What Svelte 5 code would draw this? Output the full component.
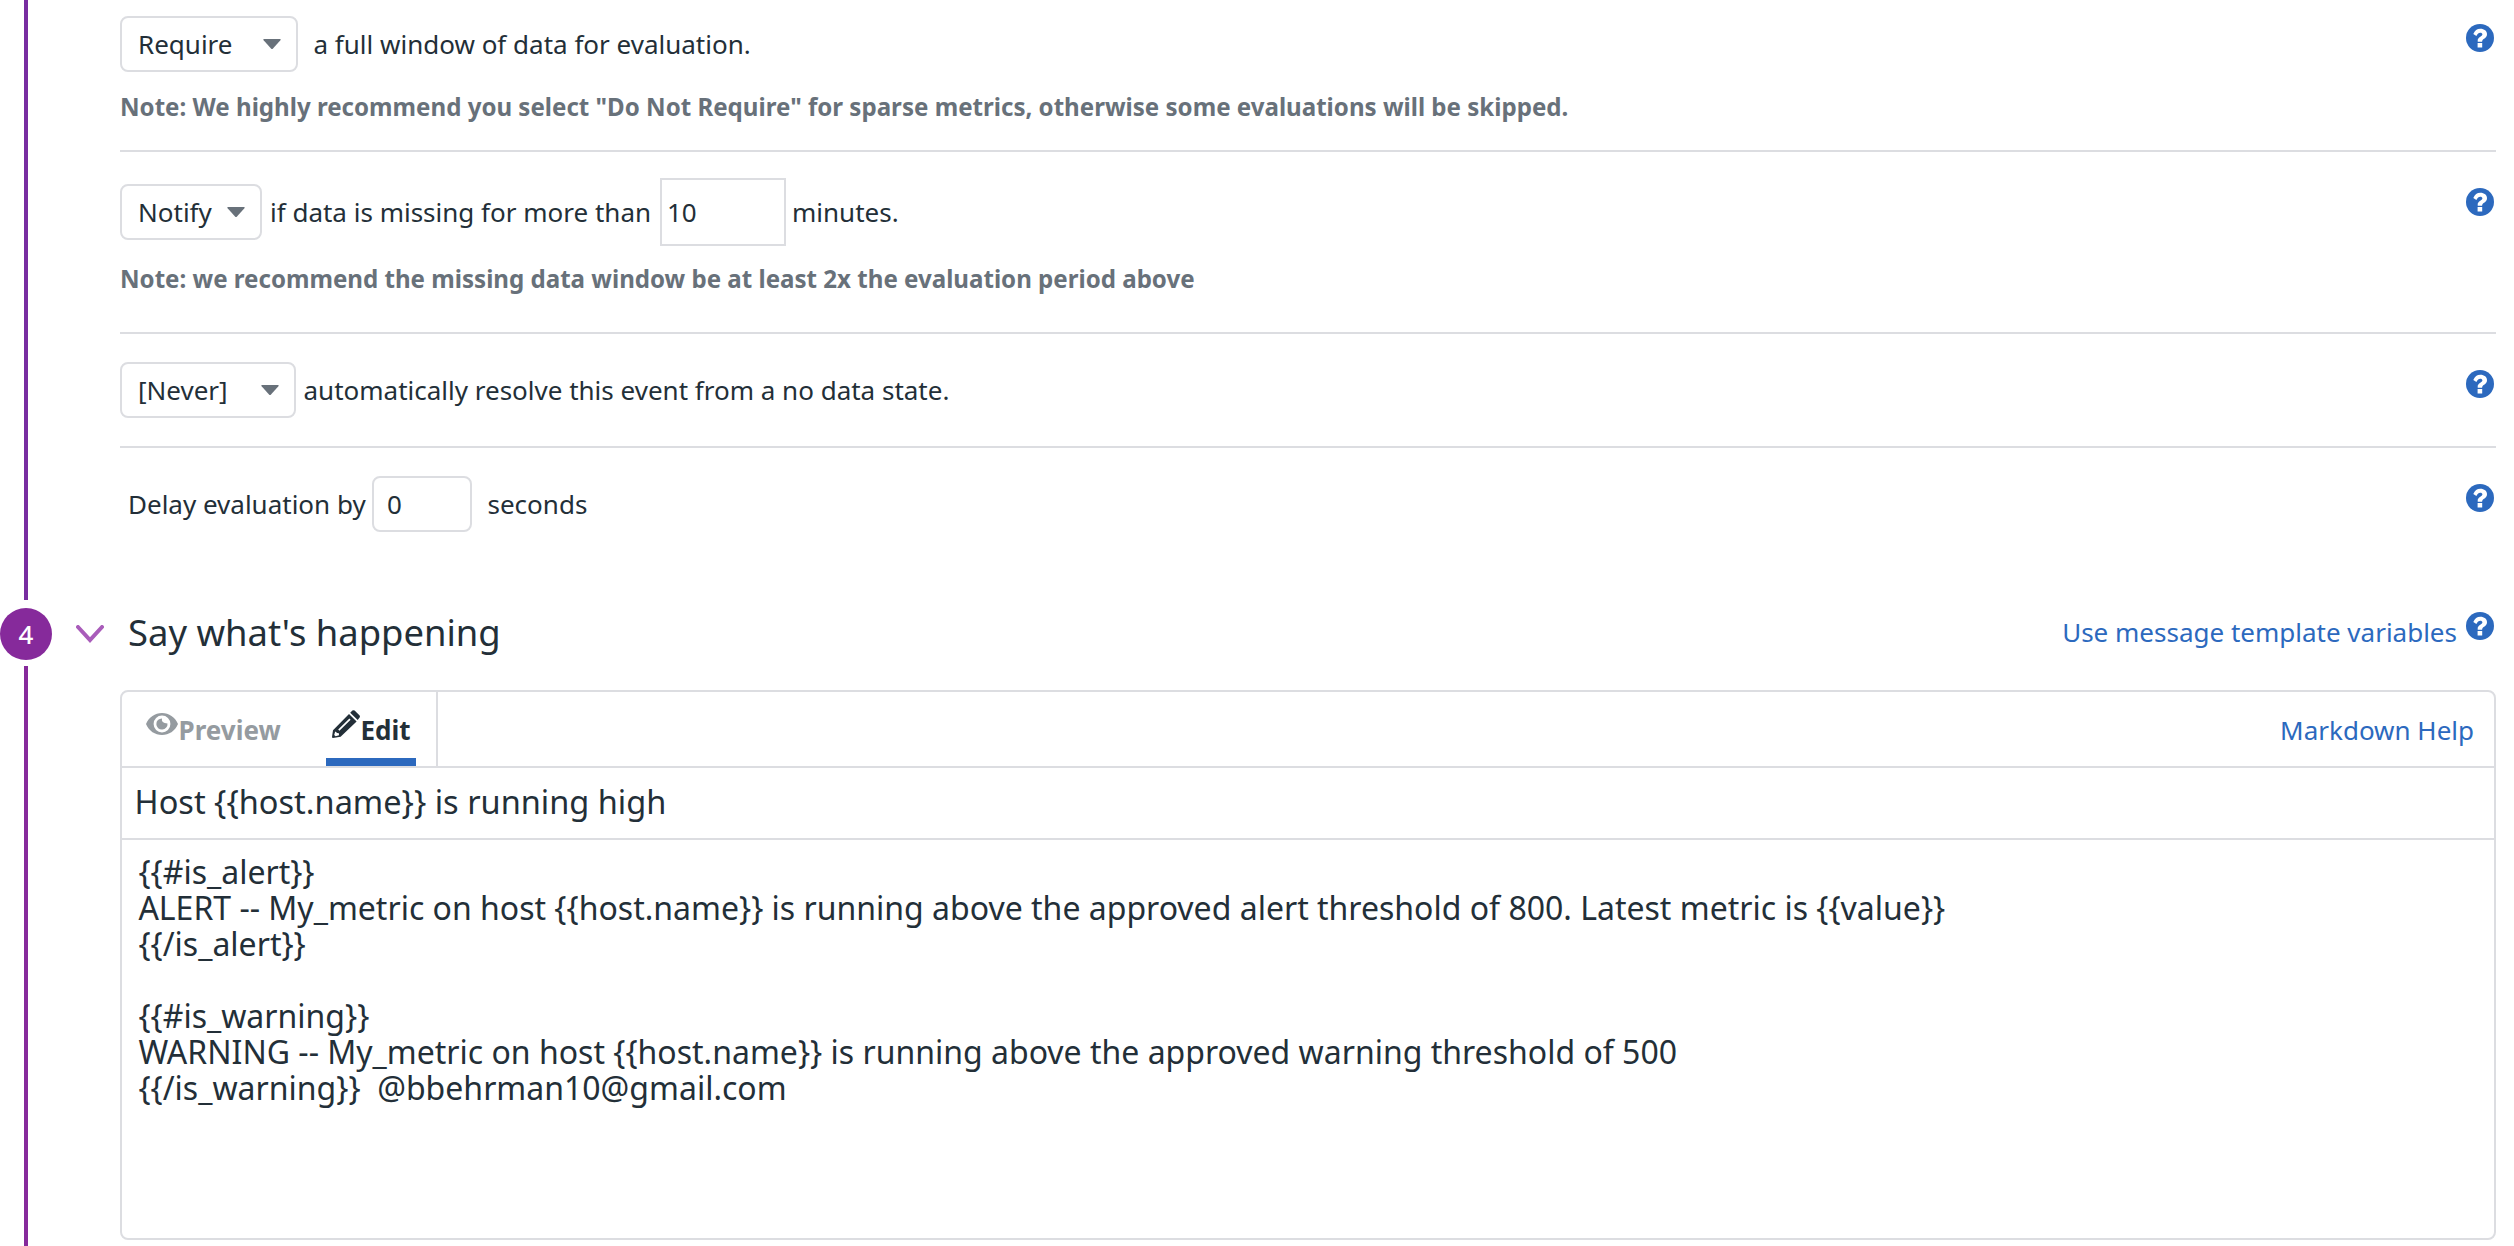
<script>
  const message = `{{#is_alert}}
ALERT -- My_metric on host {{host.name}} is running above the approved alert threshold of 800. Latest metric is {{value}}
{{/is_alert}}

{{#is_warning}}
WARNING -- My_metric on host {{host.name}} is running above the approved warning threshold of 500
{{/is_warning}}  @bbehrman10@gmail.com`;
  const title = 'Host {{host.name}} is running high';
</script>

{#snippet help()}
  <svg class="help" viewBox="0 0 28 28" aria-label="Help">
    <circle cx="14" cy="14" r="14" />
    <path d="M7.3 9.9C8.800 6.600 11 4.700 14.300 4.700 18.300 4.700 21 7 21 10.200 21 14.600 16.100 14.400 16.100 17.700H11.700V16.600C11.700 13 16.400 12.700 16.400 10.300 16.400 9.200 15.500 8.700 14.200 8.700 12.600 8.700 11.700 9.700 10.400 12ZM11.600 19H16.200V23.400H11.600Z" />
  </svg>
{/snippet}

{#snippet caret()}
  <svg class="caret" viewBox="0 0 18 10"><path d="M1 0h16q1.4 0 .4 1.2L10 9.4q-1 1-2 0L.6 1.2Q-.4 0 1 0Z" /></svg>
{/snippet}

<div class="page">
  <div class="rail">
    <div class="line before"></div>
    <div class="step">4</div>
    <div class="line after"></div>
  </div>
  <svg class="chevron" viewBox="0 0 28 18"><path d="M2 2l12 13L26 2" /></svg>
  <main>
    <section class="row require">
      <div class="control">
        <div class="select wide">Require {@render caret()}</div>
        <span class="after-wide">a full window of data for evaluation.</span>
      </div>
      <p class="note">Note: We highly recommend you select "Do Not Require" for sparse metrics, otherwise some evaluations will be skipped.</p>
      {@render help()}
    </section>
    <section class="row notify">
      <div class="control">
        <div class="select narrow">Notify {@render caret()}</div>
        <span class="after-narrow">if data is missing for more than</span>
        <div class="number square">10</div>
        <span class="unit">minutes.</span>
      </div>
      <p class="note">Note: we recommend the missing data window be at least 2x the evaluation period above</p>
      {@render help()}
    </section>
    <section class="row resolve">
      <div class="control">
        <div class="select never">[Never] {@render caret()}</div>
        <span class="after-never">automatically resolve this event from a no data state.</span>
      </div>
      {@render help()}
    </section>
    <section class="row delay">
      <div class="control">
        <span class="before-input">Delay evaluation by</span>
        <div class="number round">0</div>
        <span class="seconds">seconds</span>
      </div>
      {@render help()}
    </section>
    <header>
      <h2>Say what's happening</h2>
      <a class="link" href="#variables">Use message template variables</a>
      {@render help()}
    </header>
    <div class="panel">
      <div class="tabs">
        <div class="tab preview">
          <svg class="eye" viewBox="0 0 32 22"><path fill-rule="evenodd" d="M16 0C23 0 29 4 32 11 29 18 23 22 16 22S3 18 0 11C3 4 9 0 16 0ZM16 2.600a8.400 8.400 0 1 0 0 16.800 8.400 8.400 0 0 0 0-16.800ZM16 5.400Q14.800 9.800 21.500 10.400A5.600 5.600 0 1 1 16 5.400Z" /></svg>
          <span>Preview</span>
        </div>
        <div class="tab edit">
          <svg class="pencil" viewBox="0 0 28 28"><path fill-rule="evenodd" d="M1 20.300 17 4 24.600 11.400 8.600 26.800 1 28Q0 28 0 27ZM3.200 21.600 2.200 24.900 3.600 26.300 7 25.300 6.900 23.200 5.200 23ZM6.200 19.600 7.400 20.700 18.600 9.700 17.400 8.500ZM18.200 2.800 20.400.600Q21.400-.3 22.600.600L27.400 5.300Q28.400 6.300 27.600 7.400L25.700 10Z" /></svg>
          <span>Edit</span>
        </div>
        <a class="link markdown" href="#markdown">Markdown Help</a>
      </div>
      <div class="title">{title}</div>
      <div class="message">{message}</div>
    </div>
  </main>
</div>

<style>
  :global(body) { background: #fff; }
  .page {
    display: flex;
    width: 2514px;
    height: 1246px;
    overflow: hidden;
    box-sizing: border-box;
    color: #232f38;
    font: 26px/36px "Noto Sans", sans-serif;
    white-space: nowrap;
  }
  .page * { box-sizing: border-box; }
  .rail { width: 52px; display: flex; flex-direction: column; align-items: center; flex: none; }
  .line { width: 4px; }
  .before { height: 600px; background: #782da0; }
  .after { flex: 1; background: #862a9b; }
  .step {
    width: 52px; height: 52px; margin: 8px 0 6px; border-radius: 50%;
    background: #862a9b; color: #fff; text-align: center; line-height: 52px; font-weight: 500;
  }
  .chevron { width: 28px; height: 18px; margin: 625px 16px 0 24px; flex: none; }
  .chevron path { fill: none; stroke: #a95cba; stroke-width: 4; stroke-linecap: round; }
  main { width: 2376px; flex: none; display: flex; flex-direction: column; }
  .row { display: grid; grid-template-columns: 1fr auto; padding-right: 2px; border-bottom: 2px solid #dcdde1; }
  .row .control { grid-column: 1; grid-row: 1; }
  .row .note { grid-column: 1; grid-row: 2; }
  .row .help { grid-column: 2; grid-row: 1 / span 2; }
  .control { display: flex; align-items: center; }
  .help { width: 28px; height: 28px; flex: none; }
  .help circle { fill: #2c69be; }
  .help path { fill: #fff; }
  .require { height: 152px; padding-top: 16px; grid-template-rows: 56px auto; }
  .require .help { margin-top: 8px; }
  .require .note { padding-top: 17px; }
  .notify { height: 182px; padding-top: 26px; grid-template-rows: 68px auto; }
  .notify .help { margin-top: 10px; }
  .notify .note { padding-top: 15px; }
  .resolve { height: 114px; padding-top: 28px; grid-template-rows: 56px; }
  .resolve .help { margin-top: 8px; }
  .delay { height: 160px; padding-top: 28px; grid-template-rows: 56px; border: 0; }
  .delay .help { margin-top: 8px; }
  .note { margin: 0; color: #68717a; font-size: 24.1px; font-weight: 700; }
  .select {
    height: 56px; padding: 0 15px 0 16px; display: flex; align-items: center; justify-content: space-between;
    border: 2px solid #dcdde1; border-radius: 8px;
  }
  .wide { width: 178px; }
  .narrow { width: 142px; }
  .never { width: 176px; }
  .caret { width: 18px; height: 10px; fill: #68717a; }
  .after-wide { margin-left: 15.5px; }
  .after-narrow { margin-left: 8px; width: 390px; }
  .after-never { margin-left: 7.5px; }
  .number { border: 2px solid #dcdde1; display: flex; align-items: center; }
  .square { width: 126px; height: 68px; padding-left: 5px; }
  .unit { margin-left: 6px; }
  .before-input { margin-left: 8px; width: 244px; }
  .round { width: 100px; height: 56px; padding-left: 13px; border-radius: 8px; }
  .seconds { margin-left: 15.5px; }
  header { display: flex; height: 82px; align-items: flex-start; padding: 0 2px 0 8px; }
  h2 { margin: 0 auto 0 0; font-size: 36.4px; font-weight: 400; line-height: 48px; }
  header .link { margin: 6px 9px 0 0; }
  header .help { margin-top: 4px; }
  .link { color: #2c69be; text-decoration: none; }
  .panel { height: 550px; border: 2px solid #dcdde1; border-radius: 8px; }
  .tabs { display: flex; height: 76px; border-bottom: 2px solid #dcdde1; }
  .tab { display: flex; font-weight: 700; height: 74px; padding-top: 20px; }
  .preview { width: 204px; padding-left: 24px; color: #959ba0; }
  .preview span { margin-left: .6px; }
  .edit { width: 112px; border-right: 2px solid #dcdde1; }
  .edit { background: linear-gradient(#2c69be, #2c69be) 0 100% / 90px 8px no-repeat; padding-left: 6px; }
  .eye { width: 32px; height: 22px; margin-top: 1px; fill: currentColor; }
  .pencil { width: 28px; height: 28px; margin: -2px .5px 0 0; fill: currentColor; }
  .markdown { margin: 20px 20px 0 auto; }
  .title { height: 72px; padding-left: 12.6px; border-bottom: 2px solid #dcdde1; font-size: 32.5px; line-height: 68px; }
  .message { padding: 14px 16.4px; font-size: 32px; line-height: 36px; white-space: pre; }
</style>
